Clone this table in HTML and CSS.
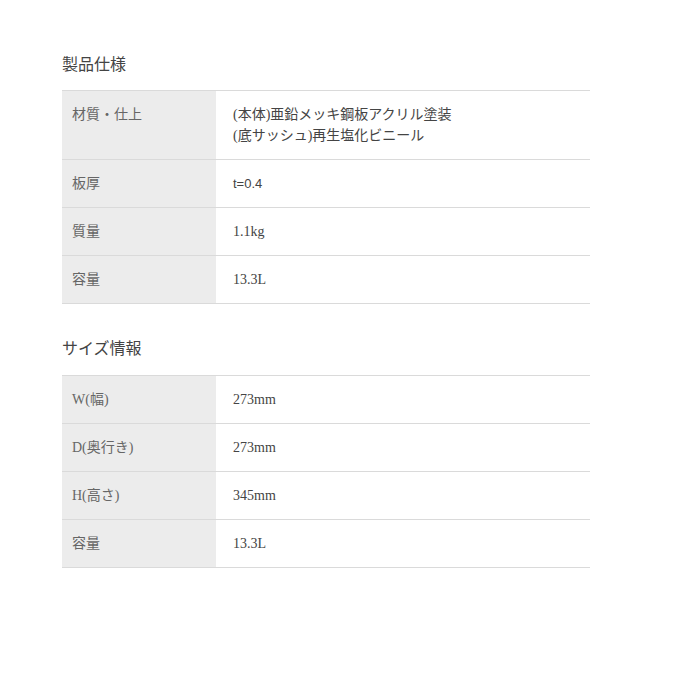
FILE: index.html
```html
<!DOCTYPE html>
<html lang="ja">
<head>
    <meta charset="UTF-8">
    <meta name="viewport" content="width=device-width, initial-scale=1.0">
    <title>製品仕様</title>
    <link rel="stylesheet" href="styles.css">
</head>
<body>
    <div class="spec">
        <h2 class="spec-title">製品仕様</h2>
        <table class="spec-table">
            <tr>
                <th>材質・仕上</th>
                <td>(本体)亜鉛メッキ鋼板アクリル塗装<br>(底サッシュ)再生塩化ビニール</td>
            </tr>
            <tr>
                <th>板厚</th>
                <td class="sans">t=0.4</td>
            </tr>
            <tr>
                <th>質量</th>
                <td>1.1kg</td>
            </tr>
            <tr>
                <th>容量</th>
                <td>13.3L</td>
            </tr>
        </table>

        <h2 class="spec-title second">サイズ情報</h2>
        <table class="spec-table">
            <tr>
                <th>W(幅)</th>
                <td>273mm</td>
            </tr>
            <tr>
                <th>D(奥行き)</th>
                <td>273mm</td>
            </tr>
            <tr>
                <th>H(高さ)</th>
                <td>345mm</td>
            </tr>
            <tr>
                <th>容量</th>
                <td>13.3L</td>
            </tr>
        </table>
    </div>
</body>
</html>
```

FILE: styles.css
```css
body {
    margin: 0;
    background: #fff;
    color: #555;
    font-family: "Liberation Serif", "Noto Sans CJK JP", serif;
}
.spec {
    width: 528px;
    padding: 53px 0 0 62px;
}
.spec-title {
    margin: 0 0 13px;
    font-size: 16px;
    line-height: 24px;
    font-weight: normal;
    color: #444;
}
.spec-title.second {
    margin-top: 33px;
    margin-bottom: 14px;
}
.spec-table {
    width: 100%;
    border-collapse: collapse;
    border-top: 1px solid #dadada;
    font-size: 14px;
    line-height: 21px;
}
.spec-table th,
.spec-table td {
    padding: 13px 10px;
    border-bottom: 1px solid #dadada;
    text-align: left;
    vertical-align: top;
    font-weight: normal;
}
.spec-table th {
    width: 134px;
    background: #ececec;
    color: #666;
}
.spec-table td {
    padding-left: 17px;
    color: #444;
}
.spec-table td.sans {
    font-family: "Liberation Sans", sans-serif;
    font-size: 13px;
}
```
